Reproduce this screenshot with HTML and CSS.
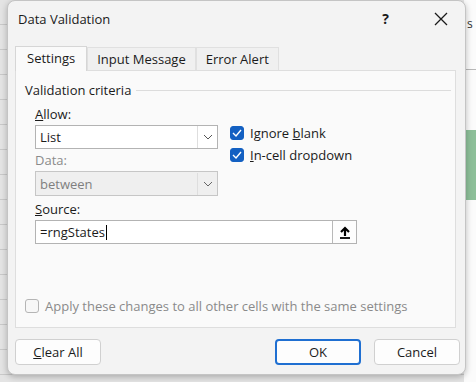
FILE: index.html
```html
<!DOCTYPE html>
<html>
<head>
<meta charset="utf-8">
<link rel="stylesheet" href="styles.css">
</head>
<body>
<div class="screen">
  <div class="sheet-right">
    <span class="sheet-s">s</span>
    <div class="sheet-green"></div>
  </div>
  <div class="dialog">
    <div class="titlebar">
      <span class="title">Data Validation</span>
      <span class="help">?</span>
      <svg class="close" width="14" height="14" viewBox="0 0 14 14"><path d="M1 1L13 13M13 1L1 13" stroke="#1a1a1a" stroke-width="1.3" fill="none"/></svg>
    </div>
    <div class="tabs">
      <div class="tab active">Settings</div>
      <div class="tab">Input Message</div>
      <div class="tab">Error Alert</div>
    </div>
    <div class="panel">
      <div class="group-head">
        <span>Validation criteria</span>
        <div class="rule"></div>
      </div>
      <div class="criteria">
        <div class="fields">
          <div class="label"><u>A</u>llow:</div>
          <div class="select">
            <span class="value">List</span>
            <span class="arrow"><svg width="10" height="6" viewBox="0 0 10 6"><path d="M1 1L5 5L9 1" stroke="#555" stroke-width="1" fill="none"/></svg></span>
          </div>
          <div class="label disabled">Data:</div>
          <div class="select off">
            <span class="value">between</span>
            <span class="arrow"><svg width="10" height="6" viewBox="0 0 10 6"><path d="M1 1L5 5L9 1" stroke="#666" stroke-width="1" fill="none"/></svg></span>
          </div>
        </div>
        <div class="checks">
          <div class="check"><span class="box on"><svg width="10" height="8" viewBox="0 0 10 8"><path d="M1 4L4 7L9 1" stroke="#fff" stroke-width="1.4" fill="none"/></svg></span><span>Ignore <u>b</u>lank</span></div>
          <div class="check"><span class="box on"><svg width="10" height="8" viewBox="0 0 10 8"><path d="M1 4L4 7L9 1" stroke="#fff" stroke-width="1.4" fill="none"/></svg></span><span><u>I</u>n-cell dropdown</span></div>
        </div>
      </div>
      <div class="source">
        <div class="label"><u>S</u>ource:</div>
        <div class="input">
          <span class="value">=rngStates<span class="caret"></span></span>
          <span class="upload"><svg width="12" height="14" viewBox="0 0 12 14"><path d="M6 11V3M2 7L6 3L10 7" stroke="#000" stroke-width="2.2" fill="none"/><path d="M1 13H11" stroke="#000" stroke-width="1.8"/></svg></span>
        </div>
      </div>
      <div class="apply"><span class="box"></span><span>Apply these changes to all other cells with the same settings</span></div>
    </div>
    <div class="buttons">
      <div class="btn"><u>C</u>lear All</div>
      <div class="spacer"></div>
      <div class="btn primary">OK</div>
      <div class="btn">Cancel</div>
    </div>
  </div>
</div>
</body>
</html>
```
FILE: styles.css
```css
* { box-sizing: border-box; }
html, body { margin: 0; padding: 0; }
body {
  font-family: "Open Sans", "Noto Sans", sans-serif;
  font-size: 13px;
  color: #1b1b1b;
}
.screen {
  position: relative;
  width: 476px;
  height: 382px;
  overflow: hidden;
  background-color: #e4e4e4;
  background-image: repeating-linear-gradient(to bottom, transparent 0 24px, #c9c9c9 24px 25px);
  padding-left: 7px;
}
.sheet-right {
  position: absolute;
  right: 0;
  top: 0;
  width: 12px;
  height: 382px;
  background: #fbfbfb;
}
.sheet-s {
  position: absolute;
  left: 3px;
  top: 15px;
  font-size: 12px;
  color: #333;
}
.sheet-green {
  position: absolute;
  left: 0;
  right: 0;
  top: 130px;
  height: 70px;
  background: #8dbf99;
}
.sheet-right::before {
  content: "";
  position: absolute;
  left: 0; right: 0; top: 69px;
  border-top: 1px solid #b8b8b8;
}
.dialog {
  position: relative;
  width: 459px;
  height: 375px;
  background: #f3f3f3;
  border: 1px solid #c4c4c4;
  border-radius: 8px;
  box-shadow: 0 2px 6px rgba(0,0,0,0.25);
  padding: 0 9px 0 7px;
  display: flex;
  flex-direction: column;
}
.titlebar {
  height: 45px;
  display: flex;
  align-items: flex-start;
  padding-top: 8px;
  padding-left: 3px;
}
.title { font-size: 13px; flex: 1; line-height: 20px; color: #1a1a1a; }
.help { font-size: 14px; font-weight: 700; margin-right: 45px; line-height: 20px; }
.close { margin-right: 8px; margin-top: 3px; }
.tabs {
  display: flex;
  height: 24px;
  align-items: flex-end;
}
.tab {
  height: 23px;
  padding: 0 9px;
  line-height: 22px;
  background: #f0f0f0;
  border: 1px solid #e0e0e0;
  border-bottom: 0;
}
.tab.active {
  height: 25px;
  background: #fafafa;
  border-color: #d6d6d6;
  padding: 0 11px;
  margin-bottom: -1px;
  position: relative;
  z-index: 1;
}
.panel {
  height: 258px;
  background: #fafafa;
  border: 1px solid #dedede;
  padding: 10px 0 0 9px;
  display: flex;
  flex-direction: column;
}
.group-head {
  display: flex;
  align-items: center;
  height: 18px;
}
.group-head .rule {
  flex: 1;
  border-top: 1px solid #dcdcdc;
  margin: 0 4px 0 5px;
}
.criteria {
  display: flex;
  padding-left: 10px;
  margin-top: 4px;
}
.fields { width: 183px; }
.label { height: 22px; line-height: 22px; }
.label.disabled { color: #8a8a8a; }
.select {
  height: 24px;
  background: #fff;
  border: 1px solid #b3b3b3;
  display: flex;
  align-items: center;
}
.select.off {
  height: 25px;
  background: #efefef;
  border-color: #c6c6c6;
  color: #7f7f7f;
}
.select .value { flex: 1; padding-left: 4px; }
.select .arrow {
  width: 20px;
  height: 22px;
  border-left: 1px solid #dedede;
  display: flex;
  align-items: center;
  justify-content: center;
}
.checks {
  margin-left: 12px;
  padding-top: 22px;
  display: flex;
  flex-direction: column;
  gap: 7px;
}
.check { display: flex; align-items: center; height: 15px; }
.box {
  width: 14px;
  height: 14px;
  border-radius: 3px;
  border: 1px solid #8c8c8c;
  background: #fff;
  margin-right: 6px;
  display: inline-flex;
  align-items: center;
  justify-content: center;
  flex: none;
}
.box.on { background: #1360c2; border-color: #1360c2; }
.source { padding-left: 10px; margin-top: 2px; }
.input {
  width: 322px;
  height: 24px;
  background: #fff;
  border: 1px solid #b3b3b3;
  display: flex;
  align-items: center;
}
.input .value { flex: 1; padding-left: 4px; display: flex; align-items: center; }
.caret { display: inline-block; width: 1px; height: 15px; background: #000; margin-left: 1px; }
.upload {
  width: 24px;
  height: 22px;
  border-left: 1px solid #b8b8b8;
  background: #fdfdfd;
  display: flex;
  align-items: center;
  justify-content: center;
}
.apply {
  margin-top: auto;
  margin-bottom: 12px;
  display: flex;
  align-items: center;
  color: #8a8a8a;
}
.apply .box { border-color: #b5b5b5; background: #f7f7f7; }
.buttons {
  display: flex;
  margin-top: 11px;
  margin-right: -4px;
  gap: 13px;
}
.spacer { flex: 1; }
.btn {
  width: 86px;
  height: 26px;
  background: #fdfdfd;
  border: 1px solid #d0d0d0;
  border-radius: 4px;
  text-align: center;
  line-height: 24px;
}
.btn.primary { border: 2px solid #1f6fd1; line-height: 22px; }
```
